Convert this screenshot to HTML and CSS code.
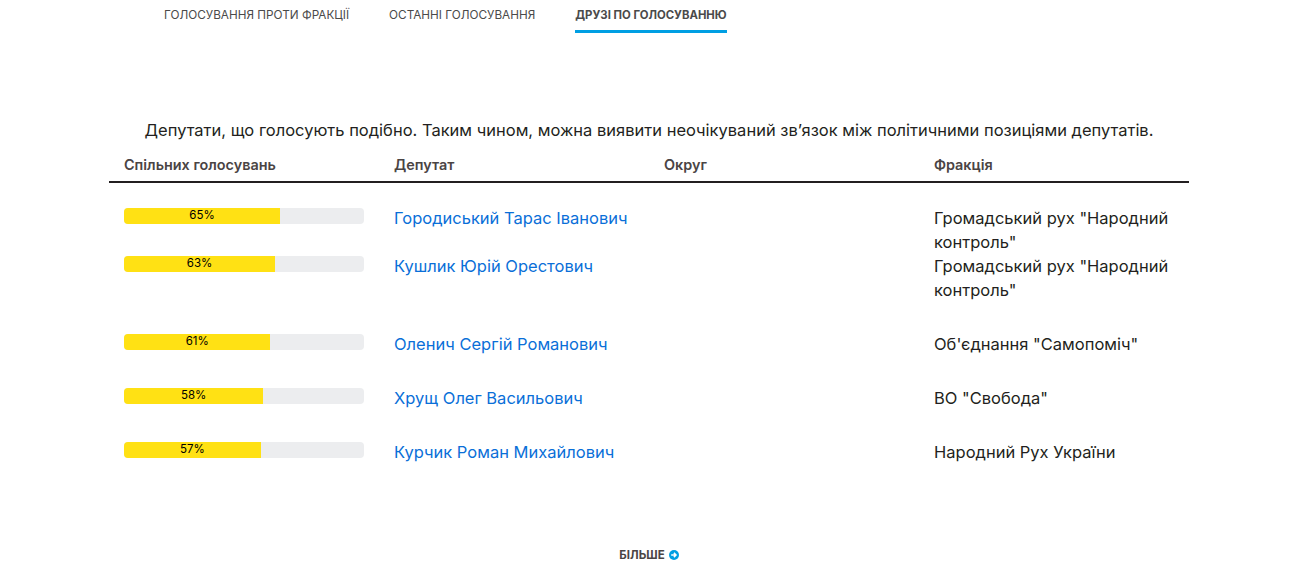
FILE: index.html
```html
<!DOCTYPE html>
<html lang="uk">
<head>
<meta charset="utf-8">
<title>Друзі по голосуванню</title>
<link rel="stylesheet" href="styles.css">
</head>
<body>
<main class="page">
  <nav class="tabs">
    <a class="tab">ГОЛОСУВАННЯ ПРОТИ ФРАКЦІЇ</a>
    <a class="tab">ОСТАННІ ГОЛОСУВАННЯ</a>
    <a class="tab active">ДРУЗІ ПО ГОЛОСУВАННЮ</a>
  </nav>
  <p class="intro">Депутати, що голосують подібно. Таким чином, можна виявити неочікуваний зв’язок між політичними позиціями депутатів.</p>
  <div class="row head">
    <div class="cell">Спільних голосувань</div>
    <div class="cell">Депутат</div>
    <div class="cell">Округ</div>
    <div class="cell">Фракція</div>
  </div>
  <div class="rows">
    <div class="row">
      <div class="cell"><div class="bar"><div class="fill" style="width:65%">65%</div></div></div>
      <div class="cell"><a class="name">Городиський Тарас Іванович</a></div>
      <div class="cell"></div>
      <div class="cell">Громадський рух "Народний контроль"</div>
    </div>
    <div class="row spaced">
      <div class="cell"><div class="bar"><div class="fill" style="width:63%">63%</div></div></div>
      <div class="cell"><a class="name">Кушлик Юрій Орестович</a></div>
      <div class="cell"></div>
      <div class="cell">Громадський рух "Народний контроль"</div>
    </div>
    <div class="row spaced">
      <div class="cell"><div class="bar"><div class="fill" style="width:61%">61%</div></div></div>
      <div class="cell"><a class="name">Оленич Сергій Романович</a></div>
      <div class="cell"></div>
      <div class="cell">Об'єднання "Самопоміч"</div>
    </div>
    <div class="row spaced">
      <div class="cell"><div class="bar"><div class="fill" style="width:58%">58%</div></div></div>
      <div class="cell"><a class="name">Хрущ Олег Васильович</a></div>
      <div class="cell"></div>
      <div class="cell">ВО "Свобода"</div>
    </div>
    <div class="row spaced">
      <div class="cell"><div class="bar"><div class="fill" style="width:57%">57%</div></div></div>
      <div class="cell"><a class="name">Курчик Роман Михайлович</a></div>
      <div class="cell"></div>
      <div class="cell">Народний Рух України</div>
    </div>
  </div>
  <a class="more">БІЛЬШЕ
    <svg class="more-icon" width="10" height="10" viewBox="0 0 10 10" aria-hidden="true"><circle cx="5" cy="5" r="5" fill="#009fe3"/><path d="M2.2 5h4.6M4.9 2.9 7 5 4.9 7.1" fill="none" stroke="#fff" stroke-width="1.5"/></svg>
  </a>
</main>
</body>
</html>
```

FILE: styles.css
```css
* { box-sizing: border-box; }
html, body { margin: 0; padding: 0; background: #fff; }
body {
  font-family: "Inter", "Noto Sans", sans-serif;
  color: #231f20;
  height: 567px;
  overflow: hidden;
}
.page {
  width: 1080px;
  margin-left: 109px;
  display: flex;
  flex-direction: column;
}
.tabs {
  display: flex;
  gap: 40px;
  padding-left: 55px;
  height: 33px;
}
.tab {
  font-size: 11.75px;
  line-height: 31px;
  color: #4a4a4a;
  white-space: nowrap;
}
.tab.active {
  font-size: 11.35px;
  font-weight: 700;
  border-bottom: 3px solid #009fe3;
  height: 33px;
}
.intro {
  margin: 85px 0 0;
  font-size: 16.5px;
  line-height: 24px;
  text-align: center;
  color: #231f20;
}
.row {
  display: grid;
  grid-template-columns: repeat(4, 270px);
  font-size: 16.5px;
  line-height: 24px;
}
.cell { padding: 0 15px; }
.head {
  margin-top: 13px;
  height: 28px;
  border-bottom: 2px solid #231f20;
  font-size: 14.4px;
  font-weight: 600;
  line-height: 20px;
  color: #4a4444;
}
.rows { padding-top: 23px; }
.row.spaced:nth-child(n+3) { padding-top: 30px; }
.bar {
  height: 16px;
  margin-top: 2px;
  background: #ecedef;
  border-radius: 4px;
  overflow: hidden;
}
.fill {
  height: 100%;
  background: #ffe114;
  text-align: center;
  font-size: 11.5px;
  line-height: 14px;
  color: #000;
}
.name { color: #0a6fd8; }
.more {
  margin-top: 85px;
  align-self: center;
  display: flex;
  align-items: center;
  gap: 4px;
  font-size: 11.5px;
  font-weight: 700;
  line-height: 12px;
  color: #4a4444;
}
.more-icon { display: block; }
```
